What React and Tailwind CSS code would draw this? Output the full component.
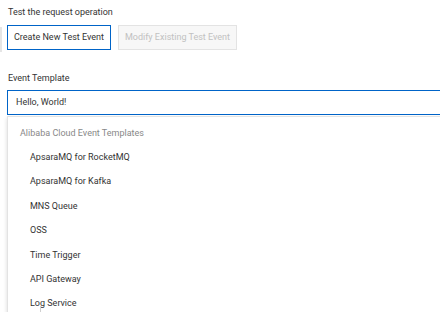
const templates = [
  'ApsaraMQ for RocketMQ',
  'ApsaraMQ for Kafka',
  'MNS Queue',
  'OSS',
  'Time Trigger',
  'API Gateway',
  'Log Service',
];

export default function App() {
  return (
    <div className="relative h-[312px] w-[440px] overflow-hidden bg-white font-['Roboto',sans-serif] text-[9px] text-[#333]">
      <div className="pl-[7px] pt-[5px]">
        <div className="pl-[1px] leading-[14px]">Test the request operation</div>

        <div className="mt-[6px] flex gap-[7px]">
          <button className="h-[25px] border border-[#0064c8] bg-white px-[6px] leading-[23px] text-[#333]">
            Create New Test Event
          </button>
          <button className="h-[25px] border border-[#e3e3e3] bg-[#f7f7f7] px-[6px] leading-[23px] text-[#c1c1c1]">
            Modify Existing Test Event
          </button>
        </div>

        <div className="mt-[21px] pl-[1px] leading-[14px]">Event Template</div>
        <div className="mt-[5px] h-[25px] w-[450px] border border-[#0064c8] pl-[8px] leading-[23px]">
          Hello, World!
        </div>

        {/* open dropdown menu */}
        <div className="mt-[1px] w-[440px] border border-[#e3e3e3] border-b-[#cfcfcf] bg-white pb-[4px] shadow-[0_2px_4px_rgba(0,0,0,0.15)]">
          <div className="pb-[4px] pl-[12px] pt-[9px] leading-[14px] text-[#888]">
            Alibaba Cloud Event Templates
          </div>
          {templates.map((t) => (
            <div key={t} className="h-[24.4px] pl-[22px] leading-[26px]">
              {t}
            </div>
          ))}
        </div>
      </div>

      {/* bits of the page showing past the menu */}
      <div className="absolute left-0 top-[27px] h-[25px] w-[2px] bg-[#e5e5e5]" />
      <div className="absolute left-[40px] top-[306px] h-[6px] w-px bg-[#d0d0d0]" />
    </div>
  );
}
